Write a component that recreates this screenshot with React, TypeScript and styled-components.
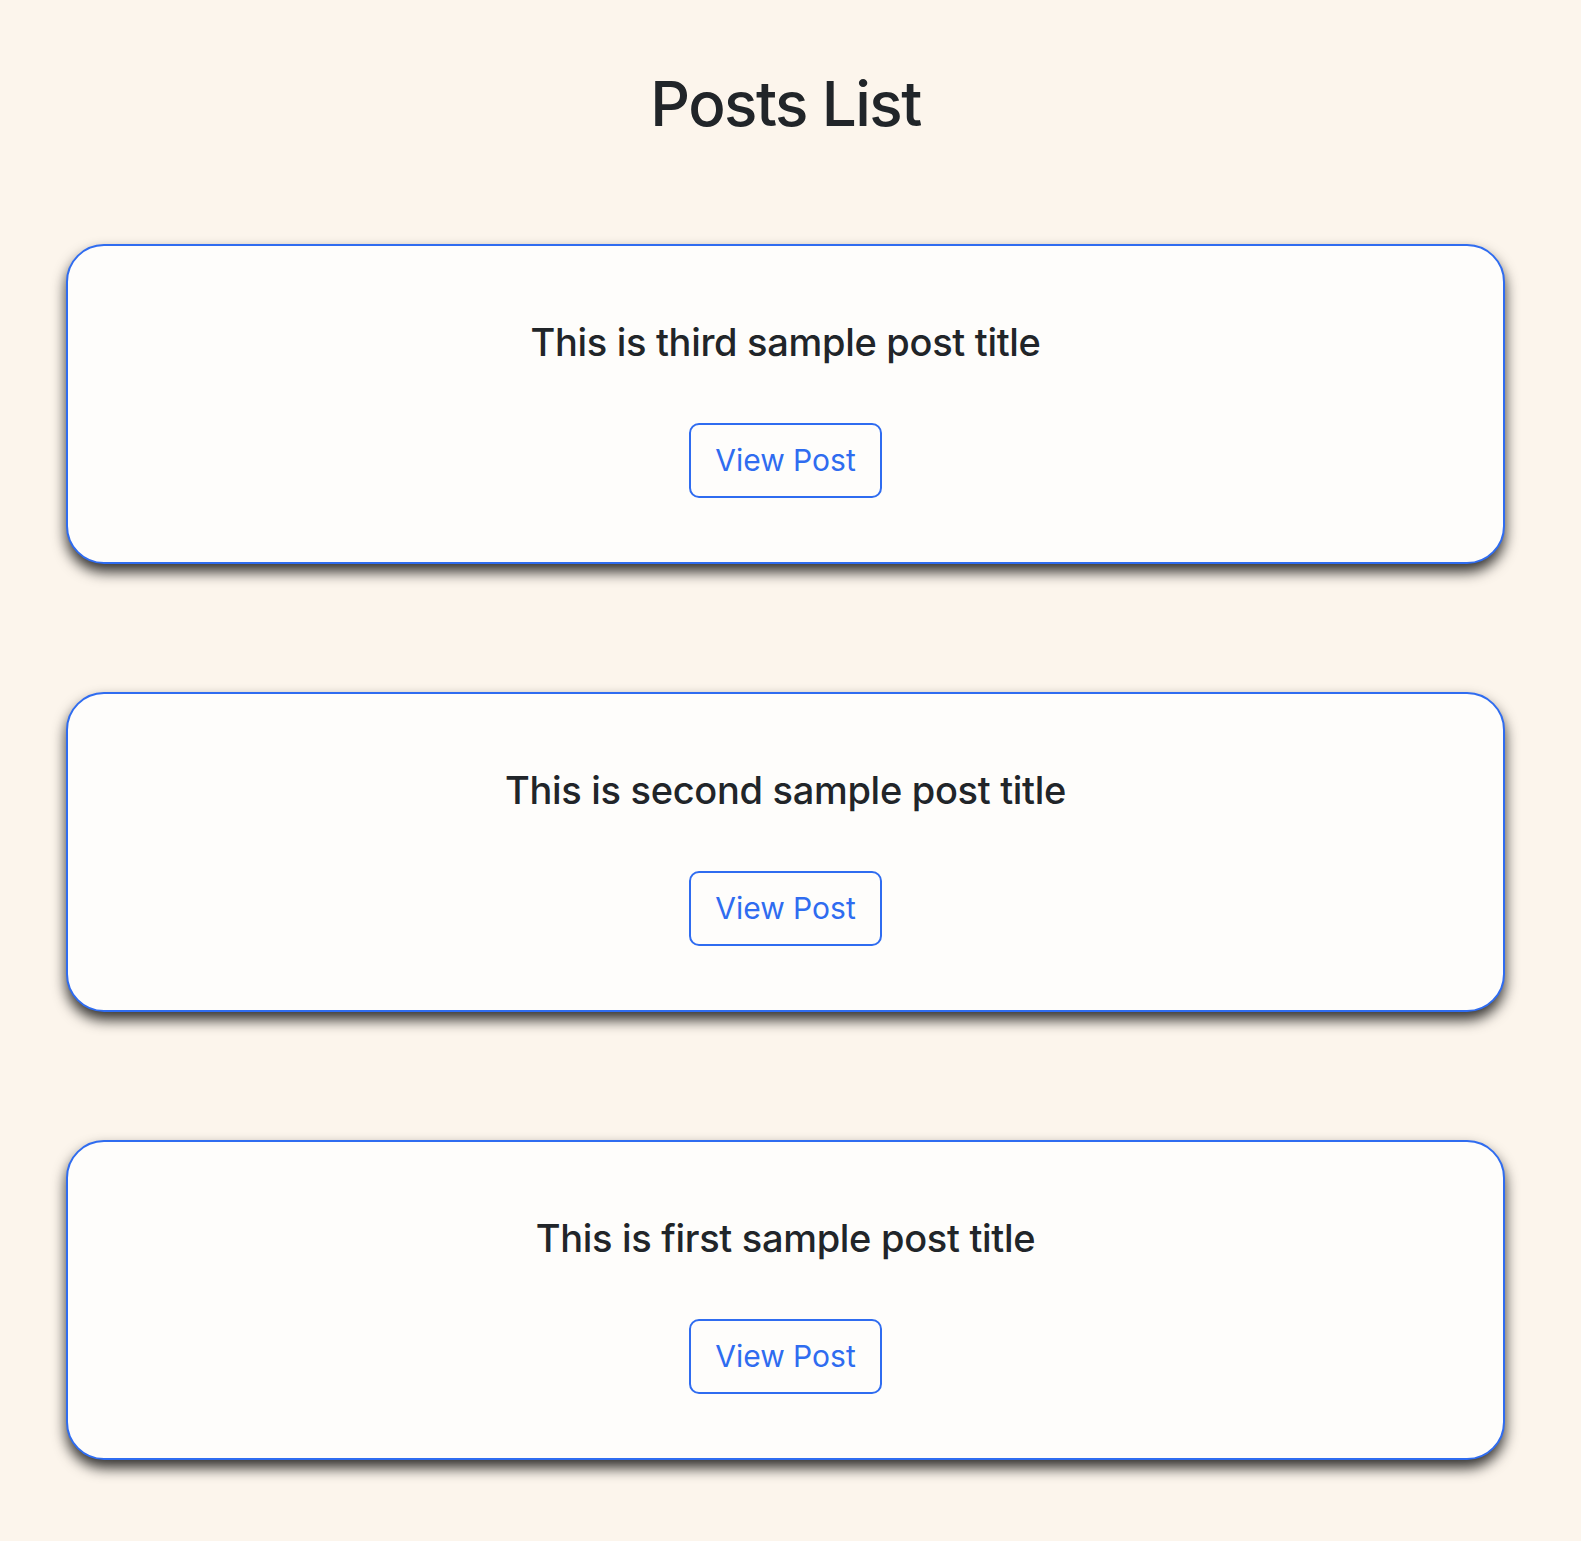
import React from "react";
import styled, { createGlobalStyle } from "styled-components";

const Global = createGlobalStyle`
  html, body { margin: 0; padding: 0; background: #fcf5ec; }
  body { font-family: Inter, "Noto Sans", sans-serif; color: #212529; }
`;

const Page = styled.div`
  min-height: 1541px;
  box-sizing: border-box;
  padding: 67px 76px 40px 66px;
  display: flex;
  flex-direction: column;
`;

const Heading = styled.h1`
  margin: 0 0 103px;
  font-size: 62px;
  line-height: 1.2;
  font-weight: 500;
  letter-spacing: -0.025em;
  text-align: center;
  color: #212529;
`;

const List = styled.div`
  display: flex;
  flex-direction: column;
  gap: 128px;
`;

const Card = styled.div`
  box-sizing: border-box;
  height: 320px;
  border: 2px solid #2f6cf0;
  border-radius: 38px;
  background: #fefdfb;
  box-shadow: 0 8px 14px rgba(0, 0, 0, 0.8);
  display: flex;
  flex-direction: column;
  align-items: center;
  padding-top: 74px;
`;

const Title = styled.h3`
  margin: 0 0 57px;
  font-size: 38px;
  line-height: 1.2;
  font-weight: 500;
  letter-spacing: -0.008em;
  color: #212529;
`;

const Button = styled.button`
  box-sizing: border-box;
  width: 193px;
  height: 75px;
  border: 2px solid #2f6cf0;
  border-radius: 10px;
  background: transparent;
  color: #2f6cf0;
  font-family: Inter, "Noto Sans", sans-serif;
  font-size: 30px;
  font-weight: 400;
  cursor: pointer;
`;

const posts = [
  "This is third sample post title",
  "This is second sample post title",
  "This is first sample post title",
];

export default function App() {
  return (
    <>
      <Global />
      <Page>
        <Heading>Posts List</Heading>
        <List>
          {posts.map((p) => (
            <Card key={p}>
              <Title>{p}</Title>
              <Button>View Post</Button>
            </Card>
          ))}
        </List>
      </Page>
    </>
  );
}
